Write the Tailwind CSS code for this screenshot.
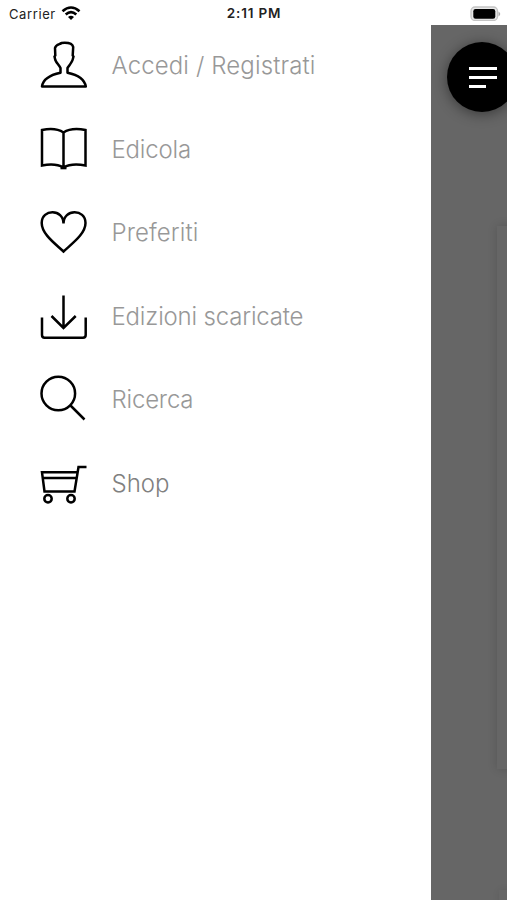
<!DOCTYPE html>
<html lang="it">
<head>
<meta charset="utf-8">
<title>Menu</title>
<script src="https://cdn.jsdelivr.net/npm/@tailwindcss/browser@4"></script>
</head>
<body class="w-[507px] h-[900px] overflow-hidden bg-white font-['Inter','Liberation_Sans',sans-serif] flex flex-col">
<header class="h-[25px] shrink-0 grid grid-cols-3 items-center pt-[3px] text-[13px] leading-none text-[#222]">
  <div class="flex items-center gap-[5px] pl-[9px]">
    <span class="tracking-[0.6px]">Carrier</span>
    <svg class="w-[20px] h-[15px] -mt-px" viewBox="0 0 20 15" fill="none" stroke="#000" stroke-width="2.6"><path d="M1.500 5.300Q10-2.300 18.500 5.300M4.700 8.500Q10 3.700 15.300 8.500"/><path d="M7 11Q10 8.300 13 11L10 14Z" fill="#000" stroke="none"/></svg>
  </div>
  <div class="text-center font-semibold text-[13.5px] tracking-[0.8px] pl-[1px]">2:11 PM</div>
  <div class="flex justify-end pr-[6px]">
    <svg class="w-[32px] h-[15px] -mt-[2px]" viewBox="469 5 32 15"><rect x="471" y="6" width="26.500" height="13.500" rx="4" fill="#e8e8e8" stroke="#c4c4c4" stroke-width="1.300"/><rect x="473.300" y="8" width="22" height="9.700" rx="2.200"/><path d="M498.500 10.500Q502 13 498.500 15.500Z" fill="#aaa"/></svg>
  </div>
</header>
<div class="flex flex-1 min-h-0">
  <nav class="w-[431px] shrink-0 bg-white flex flex-col gap-[35.5px] pt-[16px] pl-[40px] text-[24px] font-light leading-[49px] text-[#989898]">
    <a class="flex h-[48px] gap-[23.500px]"><svg class="w-[48px] h-[48px]" viewBox="40 41 48 48" fill="none" stroke="#000" stroke-width="2.500" stroke-linejoin="round"><path d="M42 86.500H85.800C84.500 78.500 76 74.500 67.500 72.700V68C69.500 65 72 62 72.700 59.500L73.500 56.500L72.700 55.500L73.200 47C72.500 43.500 67 42.500 61.500 43C60 44.500 56 44 55 48L55.300 55.500L54.500 56.500L55.300 60C56.500 63 59 65 60.500 68V72.700C52 74.500 43 78.500 42 86.500Z"/></svg><span class="tracking-[0.12px]">Accedi / Registrati</span></a>
    <a class="flex h-[48px] gap-[23.500px]"><svg class="w-[48px] h-[48px]" viewBox="40 124.500 48 48" fill="none" stroke="#000" stroke-width="2.500"><path d="M63.500 132C58 128.300 49 128 42 129.500V165C49 163.500 58 163.800 63.500 167C69 163.800 78 163.500 85.500 165V129.500C78 128 69 128.300 63.500 132V167"/><path d="M60.500 167.300H66.500" stroke-width="3"/></svg><span class="tracking-[-0.2px]">Edicola</span></a>
    <a class="flex h-[48px] gap-[23.500px]"><svg class="w-[48px] h-[48px]" viewBox="40 208 48 48" fill="none" stroke="#000" stroke-width="2.500"><path d="M63.500 223.500C63.500 208.500 41.700 208.500 41.700 223C41.700 234 55 243.500 63.500 251.500C72 243.500 85.500 234 85.500 223C85.500 208.500 63.500 208.500 63.500 223.500Z"/></svg><span class="tracking-[0.1px]">Preferiti</span></a>
    <a class="flex h-[48px] gap-[23.500px]"><svg class="w-[48px] h-[48px]" viewBox="40 291.500 48 48" fill="none" stroke="#000" stroke-width="2.500"><path d="M63.500 295V328M51.500 315.500L63.500 327.500L75.700 315.500M42 317V334.500Q42 337.200 44.500 337.200H83Q85.700 337.200 85.700 334.500V317"/></svg><span class="tracking-[-0.18px]">Edizioni scaricate</span></a>
    <a class="flex h-[48px] gap-[23.500px]"><svg class="w-[48px] h-[48px]" viewBox="40 375 48 48" fill="none" stroke="#000" stroke-width="2.500"><circle cx="58.300" cy="393.500" r="16.800"/><path d="M70 405L84.500 419.500"/></svg><span class="tracking-[-0.2px]">Ricerca</span></a>
    <a class="flex h-[48px] gap-[23.500px] text-[#808080]"><svg class="w-[48px] h-[48px]" viewBox="40 458.500 48 48" fill="none" stroke="#000" stroke-width="2.500"><path d="M86.500 466.500H78.500L74.500 491H44.500L42 471.800H77M43 477.500H76"/><circle cx="48" cy="498.300" r="3.700"/><circle cx="71" cy="498.300" r="3.700"/></svg><span>Shop</span></a>
  </nav>
  <aside class="relative flex-1 overflow-hidden bg-[#666]">
    <div class="absolute left-[66px] top-[201px] w-[60px] h-[543px] bg-[#666] shadow-[0_0_9px_rgba(0,0,0,0.16)]"></div>
    <div class="absolute left-[68px] top-[865px] w-[60px] h-[40px] bg-[#666] shadow-[0_0_7px_rgba(0,0,0,0.08)]"></div>
    <button class="absolute left-[16px] top-[17px] size-[70px] rounded-full bg-black shadow-[0_2px_14px_rgba(0,0,0,0.45)] flex flex-col justify-center gap-[6px] pl-[21.500px]">
      <span class="block w-[28px] h-[3px] bg-white"></span><span class="block w-[28px] h-[3px] bg-white"></span><span class="block w-[17px] h-[3px] bg-white"></span>
    </button>
  </aside>
</div>
</body>
</html>
